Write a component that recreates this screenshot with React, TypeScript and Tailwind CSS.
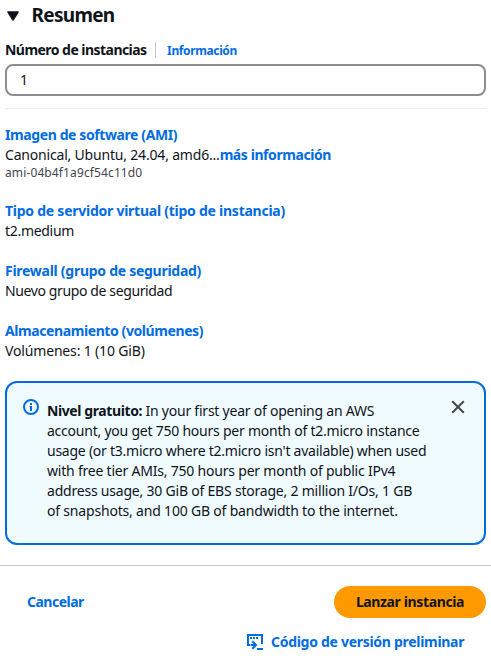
import type { ReactNode } from "react";

const INFO_LINES: { text: string; cls: string }[] = [
  { text: "account, you get 750 hours per month of t2.micro instance", cls: "tracking-[-0.23px]" },
  { text: "usage (or t3.micro where t2.micro isn't available) when used", cls: "tracking-[-0.245px]" },
  { text: "with free tier AMIs, 750 hours per month of public IPv4", cls: "tracking-[-0.21px]" },
  { text: "address usage, 30 GiB of EBS storage, 2 million I/Os, 1 GB", cls: "tracking-[-0.21px]" },
  { text: "of snapshots, and 100 GB of bandwidth to the internet.", cls: "tracking-[-0.19px]" },
];

function Section({ title, titleCls, children }: { title: string; titleCls: string; children: ReactNode }) {
  return (
    <section className="flex flex-col items-start">
      <a className={`font-bold text-[#006ce0] ${titleCls}`}>{title}</a>
      {children}
    </section>
  );
}

export default function App() {
  return (
    <div className="h-[659px] w-[491px] overflow-hidden whitespace-nowrap bg-white font-['Noto_Sans',sans-serif] text-[14px] leading-5 text-[#0f141a]">
      <div className="pl-[5px] pr-[5px]">
        <header className="flex h-[30px] items-center pl-0.5">
          <svg width="12" height="10" viewBox="0 0 12 10" className="mr-[12.5px] mt-[2px]">
            <path d="M1 1H11L6 9Z" fill="#0f141a" stroke="#0f141a" strokeWidth="1.5" strokeLinejoin="round" />
          </svg>
          <h2 className="text-[19px] font-bold leading-6 tracking-[-0.7px]">Resumen</h2>
        </header>
        <div className="mt-[10px] flex h-5 items-center">
          <label className="font-bold tracking-[-0.54px]">Número de instancias</label>
          <span className="ml-2 h-4 w-px bg-[#c6c6cd]" />
          <a className="ml-[11.5px] pt-px text-[12px] font-bold tracking-[-0.38px] text-[#006ce0]">Información</a>
        </div>
        <div className="mt-1 flex h-8 items-center rounded-lg border-2 border-[#8c8c94] bg-white pl-[13px]">1</div>
        <div className="mt-3 h-px bg-[#ebebf0]" />
        <div className="mt-4 flex flex-col gap-5">
          <Section title="Imagen de software (AMI)" titleCls="tracking-[-0.4px]">
            <p>
              <span className="tracking-[-0.19px]">Canonical, Ubuntu, 24.04, amd6...</span>
              <a className="font-bold tracking-[-0.42px] text-[#006ce0]">más información</a>
            </p>
            <p className="text-[12px] leading-4 tracking-[0.12px] text-[#424650]">ami-04b4f1a9cf54c11d0</p>
          </Section>
          <Section title="Tipo de servidor virtual (tipo de instancia)" titleCls="tracking-[-0.25px]">
            <p className="tracking-[-0.3px]">t2.medium</p>
          </Section>
          <Section title="Firewall (grupo de seguridad)" titleCls="tracking-[-0.27px]">
            <p className="tracking-[-0.38px]">Nuevo grupo de seguridad</p>
          </Section>
          <Section title="Almacenamiento (volúmenes)" titleCls="tracking-[-0.41px]">
            <p className="tracking-[-0.16px]">Volúmenes: 1 (10 GiB)</p>
          </Section>
        </div>
        <div className="mt-5 flex h-[164px] items-start rounded-xl border-2 border-[#006ce0] bg-[#f0fbff] pl-4 pt-4">
          <svg width="16" height="16" viewBox="0 0 16 16" fill="none" stroke="#006ce0" strokeWidth="2">
            <circle cx="8" cy="8" r="7" />
            <path d="M8 4V6M8 7V12" />
            <path d="M6.5 7.5H8" strokeWidth="1" />
          </svg>
          <div className="ml-2 mt-[2px] w-[390px]">
            <p>
              <b className="tracking-[-0.4px]">Nivel gratuito:</b>
              <span className="tracking-[-0.23px]"> In your first year of opening an AWS</span>
            </p>
            {INFO_LINES.map((line) => (
              <p key={line.text}><span className={line.cls}>{line.text}</span></p>
            ))}
          </div>
          <svg width="16" height="16" viewBox="0 0 16 16" className="ml-[13px]" stroke="#424650" strokeWidth="2">
            <path d="M2.2 2.2L13.8 13.8M13.8 2.2L2.2 13.8" />
          </svg>
        </div>
      </div>
      <div className="mt-5 h-px bg-[#c6c6cd]" />
      <div className="mt-5 flex h-8 items-center justify-between pl-[27px] pr-[5px]">
        <a className="font-bold tracking-[-0.5px] text-[#006ce0]">Cancelar</a>
        <button className="flex h-8 w-[152px] items-center justify-center rounded-full bg-[#ff9900] font-bold tracking-[-0.37px]">
          <span>Lanzar instancia</span>
        </button>
      </div>
      <div className="mt-[14px] flex h-5 items-center pl-[247px] text-[#006ce0]">
        <svg width="16" height="16" viewBox="0 0 16 16" fill="none" stroke="currentColor" strokeWidth="2">
          <path d="M3 11H1V1H15V10" />
          <path d="M3 4H5M6 4H8M9 4H11" />
          <path d="M3.5 11H9M5.3 7.2L9 11L5.3 14.8" strokeWidth="2" />
          <path d="M10 15H16" />
        </svg>
        <a className="ml-2 font-bold tracking-[-0.29px]">Código de versión preliminar</a>
      </div>
    </div>
  );
}
